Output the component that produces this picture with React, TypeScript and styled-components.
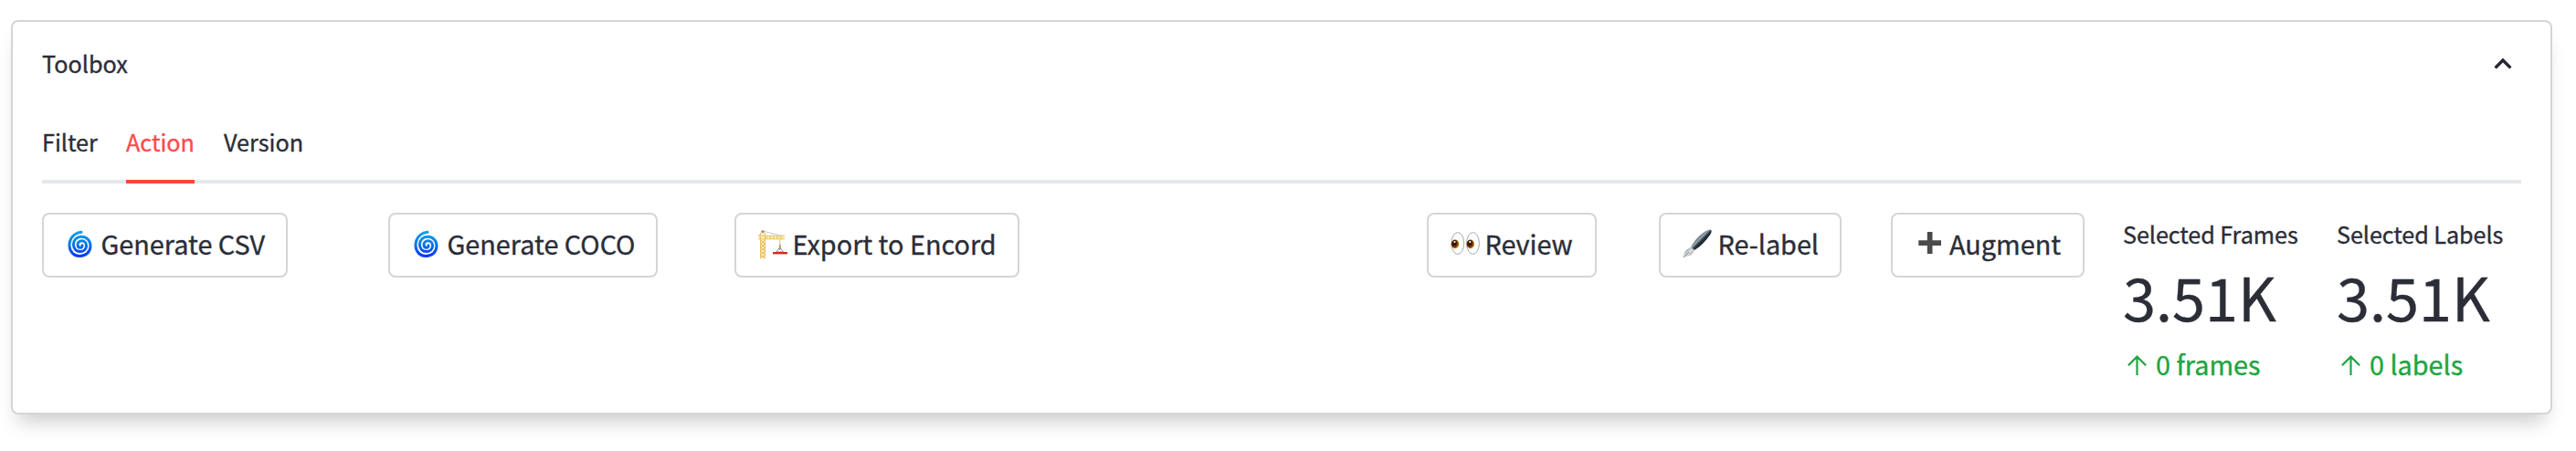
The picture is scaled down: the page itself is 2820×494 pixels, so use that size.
import React from "react";
import styled, { createGlobalStyle } from "styled-components";

const GlobalStyle = createGlobalStyle`
  *, *::before, *::after { box-sizing: border-box; }
  body {
    margin: 0;
    background: #fff;
    color: #2b2d37;
    font-family: "Source Sans Pro", "Noto Sans CJK SC", "Noto Sans", sans-serif;
    -webkit-text-stroke: 0.35px currentColor;
  }
`;

const Page = styled.main`
  height: 494px;
  padding: 22px 26px 40px 12px;
  overflow: hidden;
`;

const Card = styled.section`
  height: 432px;
  padding: 0 32px;
  border: 2px solid #d5d5d5;
  border-radius: 8px;
  background: #fff;
  box-shadow: 0 16px 20px -8px rgba(0, 0, 0, 0.2);
`;

const CardHeader = styled.header`
  display: flex;
  align-items: center;
  justify-content: space-between;
  height: 92px;
  padding: 0 10px 2px 0;
  font-size: 25.2px;
  line-height: 40px;

  svg {
    margin-top: 1px;
  }
`;

const TabList = styled.nav`
  display: flex;
  gap: 32px;
  height: 85px;
  border-bottom: 4px solid #e6e8eb;
`;

const Tab = styled.button<{ $active?: boolean; $width: number }>`
  width: ${(p) => p.$width}px;
  height: 85px;
  padding: 19px 0 22px;
  border: 0;
  border-bottom: 4px solid ${(p) => (p.$active ? "#ff4541" : "transparent")};
  background: none;
  color: ${(p) => (p.$active ? "#ff4b4b" : "inherit")};
  font: inherit;
  font-size: 25.2px;
  line-height: 40px;
  text-align: left;
  white-space: nowrap;
`;

const Columns = styled.div`
  display: grid;
  grid-template-columns: 379px 379px 758px 254px 254px 254px 234px 1fr;
  align-items: start;
  padding-top: 32px;
`;

const ActionButton = styled.button<{ $width: number; $gap: number }>`
  display: flex;
  align-items: center;
  gap: ${(p) => p.$gap}px;
  width: ${(p) => p.$width}px;
  height: 71px;
  padding: 0 0 3px 24px;
  border: 2px solid #d5d5d5;
  border-radius: 8px;
  background: #fff;
  color: inherit;
  font: inherit;
  font-size: 28.8px;
  line-height: 48px;
  white-space: nowrap;

  svg {
    flex: none;
    overflow: visible;
  }
`;

const Metric = styled.div`
  display: flex;
  flex-direction: column;
  white-space: nowrap;
`;

const MetricLabel = styled.div`
  height: 44px;
  padding-top: 3px;
  font-size: 25.2px;
  letter-spacing: -0.07px;
  line-height: 40px;
`;

const MetricValue = styled.div`
  height: 98px;
  font-size: 64.8px;
  line-height: 94px;
`;

const MetricDelta = styled.div`
  display: flex;
  align-items: center;
  gap: 10px;
  height: 48px;
  padding-left: 5px;
  color: #21a541;
  font-size: 28.8px;
  line-height: 48px;

  svg {
    margin-top: 2px;
  }
`;

const CycloneIcon = () => (
  <svg width="32" height="32" viewBox="0 0 32 32" fill="none">
    <defs>
      <linearGradient id="cyclone" x1="0" y1="0" x2="0" y2="1">
        <stop offset="0" stopColor="#0aa0ea" />
        <stop offset="0.5" stopColor="#0878e8" />
        <stop offset="1" stopColor="#0838ee" />
      </linearGradient>
    </defs>
    <path
      d="M17 3.3C9 4.2 3.9 10 4 18C4.2 25 9 29.4 15.3 29.4C22 29.4 27 24.8 27 18.5C27 12.4 22.6 8.2 17 8.2C12 8.2 8.4 12 8.4 16.8C8.4 21.4 11.6 24.4 15.7 24.4C19.8 24.4 22.6 21.6 22.6 18.2C22.6 15 20.4 12.8 17.5 12.8C14.8 12.8 13 14.7 13 17C13 19 14.3 20.2 15.9 20.2C17.4 20.2 18.3 19.2 18 17.8"
      stroke="url(#cyclone)"
      strokeWidth="3"
      strokeLinecap="round"
    />
  </svg>
);

const CraneIcon = () => (
  <svg width="32" height="32" viewBox="0 0 32 32" fill="none">
    <path d="M5 2L28 8M5 2L0.5 8" stroke="#b9b9b0" strokeWidth="0.8" />
    <path d="M0 7H29V11H0ZM2.5 4H7.5V32H2.5Z" fill="#fbedc6" />
    <path
      d="M0 7.2H29M0 10.8H29M2.5 4V32M7.5 4V32"
      stroke="#eac56c"
      strokeWidth="1"
    />
    <path
      d="M2.5 12L7.5 16L2.5 20L7.5 24L2.5 28L7.5 32M7.5 12L2.5 16L7.5 20L2.5 24L7.5 28L2.5 32M9 7V11M13 7V11M17 7V11M21 7V11M25 7V11"
      stroke="#e5b64e"
      strokeWidth="0.9"
    />
    <rect x="3.5" y="1.5" width="3" height="2.4" fill="#a88a35" />
    <path d="M23.7 11V22" stroke="#cfcab8" strokeWidth="1.2" />
    <rect x="22.8" y="17" width="2" height="4" fill="#c5a54e" />
    <path d="M23.7 20L20 25H27.5L23.7 20V23" stroke="#8c9098" strokeWidth="1" />
    <rect x="16" y="25" width="16" height="2.4" fill="#cf2e18" />
  </svg>
);

const EyesIcon = () => (
  <svg width="32" height="32" viewBox="0 0 32 32">
    <defs>
      <radialGradient id="iris" cx="0.4" cy="0.4" r="0.65">
        <stop offset="0" stopColor="#170800" />
        <stop offset="0.45" stopColor="#4a1d00" />
        <stop offset="0.8" stopColor="#a46300" />
        <stop offset="1" stopColor="#d49a16" />
      </radialGradient>
    </defs>
    {[7.7, 24.5].map((cx) => (
      <g key={cx}>
        <ellipse cx={cx} cy="15.5" rx="6.9" ry="11.9" fill="#fdfdfd" stroke="#aaa9aa" strokeWidth="1" />
        <ellipse cx={cx - 2.8} cy="16.4" rx="4.2" ry="4.9" fill="url(#iris)" />
        <circle cx={cx - 3.3} cy="14.1" r="1.1" fill="#fff" />
      </g>
    ))}
  </svg>
);

const PenIcon = () => (
  <svg width="32" height="32" viewBox="0 0 32 32">
    <defs>
      <linearGradient id="barrel" x1="0.25" y1="0.25" x2="0.75" y2="0.75">
        <stop offset="0.1" stopColor="#35434b" />
        <stop offset="0.38" stopColor="#9aaab2" />
        <stop offset="0.55" stopColor="#26343c" />
        <stop offset="1" stopColor="#0b1218" />
      </linearGradient>
      <linearGradient id="nib" x1="0" y1="0" x2="1" y2="1">
        <stop offset="0.2" stopColor="#8095a2" />
        <stop offset="0.5" stopColor="#e0e4e6" />
        <stop offset="1" stopColor="#7d6855" />
      </linearGradient>
    </defs>
    <path d="M9.2 19.5L13 22.9Q10.8 28 6 29.5L0.8 31.2L0.6 29.5Q2 25.5 3.8 23Z" fill="url(#nib)" />
    <path d="M1 31L7 25" stroke="#796c62" strokeWidth="0.8" />
    <path d="M9.4 18.8C13 12.6 20 4.4 27.5 0.9Q30.5 -0.3 31.5 1.6Q32 3.6 30 6.2C26 12.4 20 18.6 13 22.9Q10 22 9.4 18.8Z" fill="url(#barrel)" />
    <path d="M9.2 19.5Q10.2 22.2 13 22.9" fill="none" stroke="#a8b0b4" strokeWidth="1.1" />
  </svg>
);

const PlusIcon = () => (
  <svg width="32" height="32" viewBox="0 0 32 32">
    <path d="M13.8 3H19.5V12.2H29V18H19.5V27H13.8V18H4.3V12.2H13.8Z" fill="#4b4b4b" />
  </svg>
);

const ChevronUp = () => (
  <svg width="20" height="14" viewBox="0 0 20 14" fill="none">
    <path d="M1.6 11.4L10 3L18.4 11.4" stroke="#262730" strokeWidth="3.4" />
  </svg>
);

const ArrowUp = () => (
  <svg width="21" height="22" viewBox="0 0 21 22" fill="none">
    <path d="M10.5 22V1.7M0.9 11.2L10.5 1.6L20.1 11.2" stroke="currentColor" strokeWidth="2.2" />
  </svg>
);

const MetricBlock = ({ label, value, delta }: { label: string; value: string; delta: string }) => (
  <Metric>
    <MetricLabel>{label}</MetricLabel>
    <MetricValue>{value}</MetricValue>
    <MetricDelta>
      <ArrowUp />
      {delta}
    </MetricDelta>
  </Metric>
);

const actions = [
  { label: "Generate CSV", width: 269, gap: 6.5, Icon: CycloneIcon },
  { label: "Generate COCO", width: 295, gap: 6.5, Icon: CycloneIcon },
  { label: "Export to Encord", width: 312, gap: 5.5, Icon: CraneIcon },
  { label: "Review", width: 186, gap: 5.5, Icon: EyesIcon },
  { label: "Re-label", width: 200, gap: 6.5, Icon: PenIcon },
  { label: "Augment", width: 212, gap: 6, Icon: PlusIcon },
];

export default function App() {
  return (
    <Page>
      <GlobalStyle />
      <Card>
        <CardHeader>
          <span>Toolbox</span>
          <ChevronUp />
        </CardHeader>
        <TabList>
          <Tab $width={60}>Filter</Tab>
          <Tab $width={75} $active>Action</Tab>
          <Tab $width={88}>Version</Tab>
        </TabList>
        <Columns>
          {actions.map(({ label, width, gap, Icon }) => (
            <ActionButton key={label} $width={width} $gap={gap}>
              <Icon />
              {label}
            </ActionButton>
          ))}
          <MetricBlock label="Selected Frames" value="3.51K" delta="0 frames" />
          <MetricBlock label="Selected Labels" value="3.51K" delta="0 labels" />
        </Columns>
      </Card>
    </Page>
  );
}
